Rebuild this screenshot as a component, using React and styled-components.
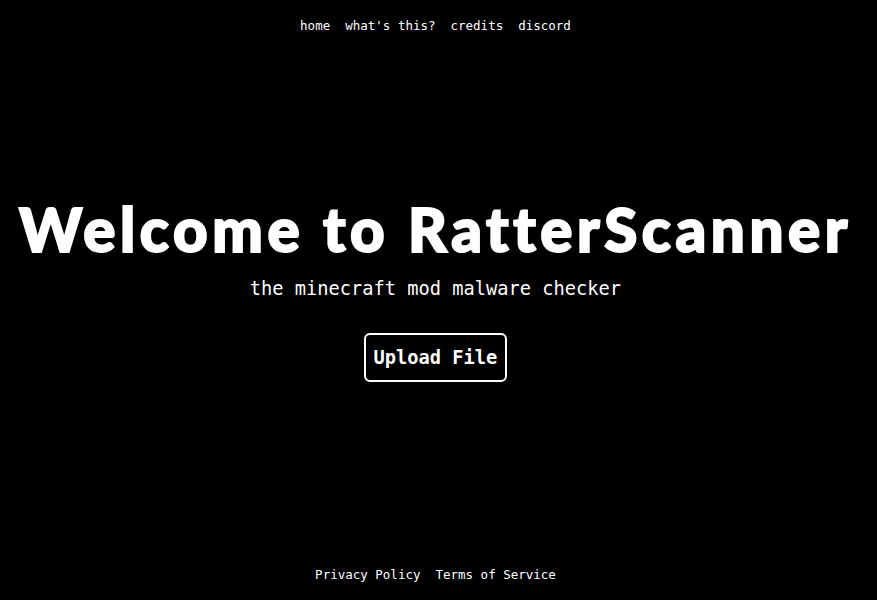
import React from "react";
import styled, { createGlobalStyle } from "styled-components";

const Global = createGlobalStyle`
  html, body { margin: 0; padding: 0; background: #000; }
  body { color: #fff; font-family: "DejaVu Sans Mono", monospace; }
`;

const Page = styled.div`
  height: 600px;
  padding-right: 6px;
  display: flex;
  flex-direction: column;
  align-items: center;
`;

const Nav = styled.nav`
  display: flex;
  justify-content: center;
  gap: 15px;
  padding-top: 18px;
  height: 17px;
  font-size: 12.5px;
  line-height: 16px;
`;

const NavLink = styled.a`
  color: #fff;
  text-decoration: none;
  cursor: pointer;
`;

const Main = styled.main`
  flex: 1;
  display: flex;
  flex-direction: column;
  align-items: center;
  justify-content: center;
  padding-bottom: 26px;
`;

const Title = styled.h1`
  margin: 0;
  font-family: "Lato", "Noto Sans", sans-serif;
  font-weight: 900;
  font-size: 60px;
  line-height: 70px;
  letter-spacing: 4.6px;
  -webkit-text-stroke: 2px #fff;
  white-space: nowrap;
`;

const Subtitle = styled.p`
  margin: 13px 0 0;
  font-size: 18.7px;
  line-height: 24px;
`;

const UploadButton = styled.button`
  margin-top: 32px;
  background: transparent;
  color: #fff;
  border: 2px solid #fff;
  border-radius: 6px;
  font-family: "DejaVu Sans Mono", monospace;
  font-weight: bold;
  font-size: 18.7px;
  padding: 0 7px;
  height: 49px;
  width: 143px;
  cursor: pointer;
`;

const Footer = styled.footer`
  display: flex;
  justify-content: center;
  gap: 15px;
  height: 33px;
  font-size: 12.5px;
  line-height: 16px;
`;

export default function App() {
  return (
    <>
      <Global />
      <Page>
        <Nav>
          <NavLink>home</NavLink>
          <NavLink>what's this?</NavLink>
          <NavLink>credits</NavLink>
          <NavLink>discord</NavLink>
        </Nav>
        <Main>
          <Title>Welcome to RatterScanner</Title>
          <Subtitle>the minecraft mod malware checker</Subtitle>
          <UploadButton>Upload File</UploadButton>
        </Main>
        <Footer>
          <NavLink>Privacy Policy</NavLink>
          <NavLink>Terms of Service</NavLink>
        </Footer>
      </Page>
    </>
  );
}
